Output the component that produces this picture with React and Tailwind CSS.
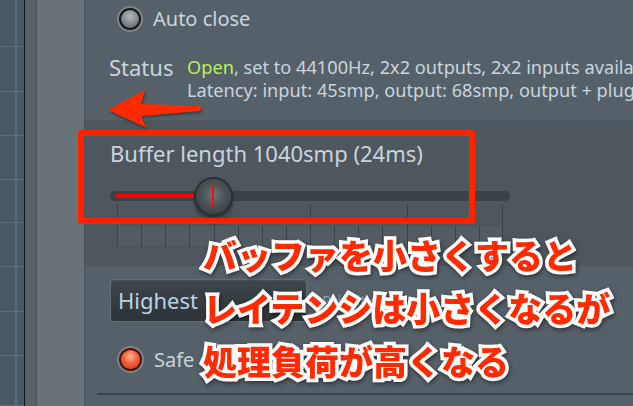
import React from "react";

const gridRows = [47, 45, 44, 44, 43, 44, 45, 44, 50];

function Ticks() {
  const cells = Array.from({ length: 16 });
  return (
    <div className="flex ml-[32px] w-[386px] h-[42px] mt-[3px]">
      {cells.map((_, i) => (
        <div key={i} className="flex-1 flex flex-col">
          <div
            className={
              "h-[22px] " +
              (i % 4 === 0 ? "border-l border-[#3a4248] " : "") +
              (i === 15 ? "border-r border-[#3a4248]" : "")
            }
          />
          <div
            className={
              "h-[20px] border-l border-[#3a4248] bg-[#535c63] " +
              (i === 15 ? "border-r" : "")
            }
          />
        </div>
      ))}
    </div>
  );
}

export default function App() {
  const sans = "font-['Noto_Sans','Open_Sans',sans-serif]";
  return (
    <div className={"relative w-[633px] h-[406px] overflow-hidden flex bg-[#566068] " + sans}>
      {/* left grid strip */}
      <div className="w-[24px] shrink-0 h-full flex flex-col bg-[#485965] relative">
        {gridRows.map((h, i) => (
          <div key={i} className="w-full border-b border-[#5c6c77] flex" style={{ height: h }}>
            <div className="w-[15px]" />
            <div className="w-[2px] bg-[#5b6b76]" />
          </div>
        ))}
      </div>
      <div className="w-[1px] shrink-0 h-full bg-[#111416]" />
      <div className="w-[12px] shrink-0 h-full bg-[#5a6268] border-r border-[#4b5359]" />
      <div className="w-[48px] shrink-0 h-full bg-[#6a7279] border-r border-[#4b5359]" />

      {/* main panel */}
      <div className="flex-1 min-w-0 overflow-hidden h-full flex flex-col">
        {/* top section */}
        <div className="h-[120px] shrink-0 bg-[#566068] text-[#c9d5dd]">
          <div className="flex items-center gap-[10px] ml-[32px] mt-[6px]">
            <div className="w-[26px] h-[26px] shrink-0 rounded-full bg-[#7d8589] p-[2px]">
              <div className="w-full h-full rounded-full bg-[#151819] p-[2px]">
                <div className="w-full h-full rounded-full bg-[radial-gradient(circle_at_50%_35%,#b4b9bc_0%,#8a9094_45%,#4e5458_100%)]" />
              </div>
            </div>
            <span className="text-[20px] leading-[26px]">Auto close</span>
          </div>
          <div className="flex items-start ml-[24px] mt-[22px]">
            <div className="w-[78px] shrink-0 text-[22px] leading-[26px]">Status</div>
            <div className="text-[18.2px] leading-[23px] whitespace-nowrap pt-[2px]">
              <div>
                <span className="text-[#b6f060]">Open</span>, set to 44100Hz, 2x2 outputs, 2x2 inputs available
              </div>
              <div>Latency: input: 45smp, output: 68smp, output + plugins: 68smp</div>
            </div>
          </div>
        </div>

        {/* buffer band */}
        <div className="h-[146px] shrink-0 bg-[#4e575e] text-[#c9d5dd]">
          <div className="ml-[25px] mt-[18px] text-[22px] leading-[30px] whitespace-nowrap">Buffer length 1040smp (24ms)</div>
          <div className="ml-[25px] mt-[23px]">
            <div className="relative w-[400px] h-[10px] rounded-full bg-[#3a4248]">
              <div className="absolute left-[6px] top-[3px] w-[81px] h-[4px] bg-[#ff0000]" />
              <div className="absolute left-[85px] top-[9px] w-[38px] h-[26px] rounded-b-full bg-[#454d53]" />
              <div className="absolute left-[84px] top-[-14px] w-[39px] h-[39px] rounded-full bg-[#2a3034] p-[2px] shadow-[0_2px_3px_rgba(0,0,0,0.35)]">
                <div className="relative w-full h-full rounded-full bg-[radial-gradient(circle_at_50%_45%,#6d7579_0%,#4a5256_45%,#343a3e_100%)]">
                  <div className="absolute left-[16px] top-[6px] w-[2px] h-[22px] bg-[#ff0a0a]" />
                </div>
              </div>
            </div>
          </div>
          <Ticks />
        </div>

        {/* lower section */}
        <div className="flex-1 bg-[#566068] text-[#c9d5dd]">
          <div className="flex items-center mt-[13px] ml-[25px]">
            <div className="w-[197px] h-[43px] shrink-0 rounded-[4px] border border-[#656d72] bg-[linear-gradient(#3e464b,#2d3438)] flex items-center pl-[7px] text-[22px] text-[#bcd3e7] shadow-[inset_0_1px_0_rgba(255,255,255,0.06)]">
              Highest
            </div>
            <div className="ml-[15px] text-[15px] text-[#8ea4b8]">Priority</div>
          </div>
          <div className="flex items-center gap-[10px] ml-[32px] mt-[24px]">
            <div className="w-[27px] h-[27px] shrink-0 rounded-full bg-[#7d8589] p-[2px]">
              <div className="w-full h-full rounded-full bg-[#4a1208] p-[2px]">
                <div className="w-full h-full rounded-full bg-[radial-gradient(circle_at_50%_35%,#ffb59a_0%,#f0603a_45%,#c8381c_100%)]" />
              </div>
            </div>
            <span className="text-[20px] leading-[26px] whitespace-nowrap">Safe overloads</span>
          </div>
          <div className="ml-[12px] mt-[20px] h-[2px] bg-[#3a4349]" />
        </div>
      </div>

      {/* annotations */}
      <div className="absolute left-[78px] top-[130px] w-[397px] h-[94px] border-[6px] border-[#ff2200] rounded-[3px]" />
      <svg className="absolute left-[100px] top-[84px] drop-shadow-[1px_2px_1px_rgba(0,0,0,0.35)]" width="110" height="50" viewBox="0 0 110 50">
        <path
          d="M8 26 L45 6 Q43 14 41 20 L100 22 Q102 24.5 100 27 L41 32 Q43 38 47 44 Z"
          fill="#ff2a00"
        />
      </svg>
      <div className="absolute left-[203px] top-[228px] font-['Noto_Sans_CJK_JP',sans-serif] font-black text-[34px] leading-[53px] text-[#ff2a00] [-webkit-text-stroke:7px_white] [paint-order:stroke_fill] whitespace-nowrap drop-shadow-[1px_2px_2px_rgba(0,0,0,0.45)]">
        <div>バッファを小さくすると</div>
        <div>レイテンシは小さくなるが</div>
        <div>処理負荷が高くなる</div>
      </div>
    </div>
  );
}
